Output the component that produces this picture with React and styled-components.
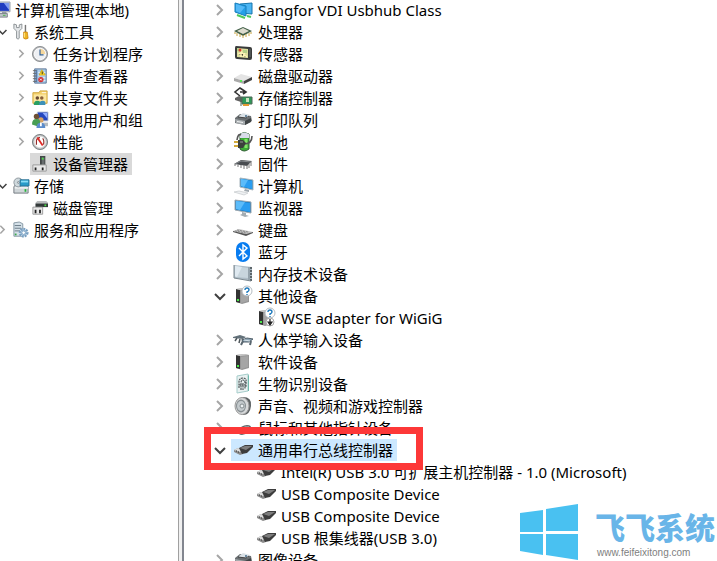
import React, { useState } from "react";

import styled, { createGlobalStyle } from "styled-components";

const GlobalStyle = createGlobalStyle`
  * {
    box-sizing: border-box;
  }
  body {
    margin: 0;
    background-color: #ffffff;
    overflow: hidden;
  }
`;

const Page = styled.main`
  position: relative;
  display: flex;
  height: 100vh;
  overflow: hidden;
  color: #000000;
  font-family: "Noto Sans", "Noto Sans CJK SC", sans-serif;
  font-size: 15px;
  line-height: 22px;
`;
const SidePane = styled.nav`
  flex: 0 0 178px;
  overflow: hidden;
`;
const Splitter = styled.div`
  flex: 0 0 6px;
  background-color: #f0f0f0;
  border-left: 1px solid #a0a0a0;
  border-right: 2px solid #82868f;
`;
const MainPane = styled.section`
  flex: 1;
  min-width: 0;
  overflow: hidden;
`;
const Tree = styled.ul`
  list-style: none;
  margin: -1px 0 0 ${(props) => props.$offset}px;
  padding: 0;
`;
const Row = styled.li`
  display: flex;
  height: 22px;
  padding-left: ${(props) => props.$indent}px;
`;
const Toggle = styled.button`
  display: flex;
  align-items: center;
  justify-content: center;
  width: ${(props) => props.$w}px;
  padding: 0;
  border: none;
  background-color: transparent;
  visibility: ${(props) => (props.$hidden ? "hidden" : "visible")};
`;
const Label = styled.button`
  position: relative;
  display: flex;
  align-items: center;
  gap: ${(props) => props.$gap}px;
  padding: 0 4px 0 ${(props) => props.$pad}px;
  border: none;
  background-color: ${(props) => props.$bg || "transparent"};
  color: inherit;
  font: inherit;
  white-space: nowrap;
`;
const Marker = styled.span`
  position: absolute;
  z-index: 1;
  inset: -12px -26px -9px -27px;
  border: 7px solid #fd3838;
  pointer-events: none;
`;
const Picture = styled.svg`
  flex: none;
  overflow: visible;
`;
const Brand = styled.a`
  position: absolute;
  right: 2px;
  bottom: 0;
  display: flex;
  align-items: flex-end;
  gap: 16px;
  color: #69b5e8;
  text-decoration: none;
`;
const BrandText = styled.span`
  display: flex;
  flex-direction: column;
`;
const BrandName = styled.strong`
  font-family: "Noto Sans CJK SC", sans-serif;
  font-size: 30px;
  font-weight: 900;
  line-height: 38px;
`;
const BrandUrl = styled.span`
  padding-left: 2px;
  color: #808080;
  font-family: "Liberation Sans", sans-serif;
  font-size: 10px;
  line-height: 16px;
`;

const Usb = () => (
  <>
    <path d="M0 9l4-2 5 2 0 4-3 1-6-3z" fill="#8b8b8b" />
    <path d="M0 9l4-2 5 2-3 2z" fill="#dcdcdc" />
    <path d="M2 10h1M4 11h1" stroke="#333" />
    <path d="M5 7l6-3h8v2l-6 6-5 1z" fill="#3d3d3d" />
    <path d="M6 7l5-2h7l-6 4z" fill="#7d7d7d" />
  </>
);
const Tower = () => (
  <>
    <path d="M2 2l8-1 5 1v13l-7 2-6-2z" fill="#969696" />
    <path d="M2 2l4 1v13l-4-1z" fill="#333" />
    <path d="M2 2l8-1 5 1-9 1z" fill="#c9c9c9" />
    <path d="M7 4l7-1v11l-7 2z" fill="#a5a5a5" />
    <path d="M4 12v2" stroke="#4bea4b" strokeWidth="2" />
  </>
);
const Query = () => (
  <>
    <circle cx="13" cy="4" r="5" fill="#fff" stroke="#b5bcc2" />
    <path d="M11 3q0-2 2-2t2 2q0 1-2 2v1M13 7v1" fill="none" stroke="#1c78bb" strokeWidth="1.4" />
  </>
);
const Monitor = () => (
  <>
    <path d="M1 1l16 2v11L1 11z" fill="#1976bb" stroke="#9ca7af" />
    <path d="M2 2l14 2v9L2 10z" fill="#2b9df0" />
    <path d="M2 2l9 1-5 8-4-1z" fill="#5cbcfa" />
    <path d="M8 13l4 1v2l3 1-4 1-5-2 2-1z" fill="#a4adb3" />
  </>
);
const Board = () => (
  <>
    <path d="M1 7l5-4 11 2 1 5-7 4-10-2z" fill="#6b7073" />
    <path d="M5 5l4-3 7 2-3 3-8-1z" fill="#dbe2e7" />
    <path d="M4 6l8 1 3-2" stroke="#444" fill="none" />
    <path d="M1 8l10 2v4l-9-2z" fill="#a5aaad" />
    <path d="M11 10l6-3v4l-6 3z" fill="#404446" />
    <path d="M3 10l6 1v1l-6-1z" fill="#f1f3f4" />
    <circle cx="12" cy="5" r="1" fill="#456b8a" />
  </>
);
const Rack = () => (
  <>
    <path d="M1 10h15v7H1z" fill="#e8e8e8" stroke="#969696" />
    <path d="M4 13v3M12 13v3" stroke="#222" strokeWidth="2" />
  </>
);

const glyphs = {
  pc: (
    <>
      <path d="M5 0h13v11H5z" fill="#dfe3e8" stroke="#8c96a0" />
      <path d="M6 1h11v9H6z" fill="#1f3cc0" />
      <path d="M11 1h6v8z" fill="#7e9bf1" />
      <path d="M9 11h5v2H9z" fill="#9299a1" />
      <path d="M1 13h14v4H1z" fill="#bdc3c8" stroke="#777e85" />
      <path d="M10 15h3" stroke="#3fb73e" />
    </>
  ),
  tools: (
    <>
      <path d="M1 0v5l3 3v8q2 2 3 0V8l3-3V0L7 1v3H4V1z" fill="#e4e7e9" stroke="#7b8185" strokeWidth=".9" />
      <path d="M14 1v8" stroke="#777" strokeWidth="1.6" />
      <path d="M12 9h4l1 7q-3 2-5 0z" fill="#eeb422" stroke="#c77c0b" strokeWidth=".8" />
      <path d="M13 10v5" stroke="#ffe98b" />
    </>
  ),
  clock: (
    <>
      <circle cx="9" cy="9" r="8.500" fill="#b7b9bc" stroke="#84878b" />
      <circle cx="9" cy="9" r="6.500" fill="#eef0f4" stroke="#fff" />
      <path d="M9 9h6A6 6 0 0 0 9 3z" fill="#f5d79d" />
      <path d="M9 4v6h4" fill="none" stroke="#35608e" strokeWidth="1.300" />
    </>
  ),
  events: (
    <>
      <path d="M3 1h13v16H3z" fill="#a9cbe8" stroke="#526d92" />
      <path d="M5 2v14" stroke="#5a7eae" strokeWidth="2" />
      <path d="M7 5h8M7 8h8M12 11h3M12 14h3" stroke="#e9f3fa" />
      <path d="M1 3h4M1 6h4M1 9h4M1 12h4M1 15h4" stroke="#666" />
      <path d="M11 2l4 6H8z" fill="#ffdc20" stroke="#c9a11c" strokeWidth=".8" />
      <path d="M11.500 4v3" stroke="#222" />
      <circle cx="10" cy="13" r="3" fill="#d62f30" />
      <path d="M9 12l2 2m0-2l-2 2" stroke="#fff" />
    </>
  ),
  shared: (
    <>
      <path d="M1 3h7l1-2h8v14H1z" fill="#f3cf68" stroke="#cda33a" />
      <path d="M2 5h14v9H2z" fill="#fbe6a0" />
      <path d="M11 3h5" stroke="#fff" />
      <circle cx="6" cy="9" r="2" fill="#684831" />
      <circle cx="11" cy="9" r="2" fill="#8b603a" />
      <path d="M2 17q0-5 4-5t4 5z" fill="#299f62" />
      <path d="M8 17q0-5 4-5t3 5z" fill="#3e91b8" />
    </>
  ),
  users: (
    <>
      <path d="M6 0h12v10H6z" fill="#2547be" stroke="#bcc6d4" />
      <path d="M12 1h5v6z" fill="#91adff" />
      <path d="M12 12h6v4h-6z" fill="#b5bbc0" />
      <circle cx="5" cy="5" r="3" fill="#6f5034" />
      <circle cx="10" cy="9" r="3" fill="#d6a264" />
      <path d="M0 14q0-6 5-6t4 5l-3 3z" fill="#489e53" />
      <path d="M5 18q0-6 5-6t5 6z" fill="#5b8ccb" />
      <path d="M10 12v4" stroke="#fff" strokeWidth="2" />
    </>
  ),
  performance: (
    <>
      <circle cx="9" cy="9" r="8.500" fill="#b9bcbc" stroke="#70777a" />
      <circle cx="9" cy="9" r="6.500" fill="#fff" stroke="#ddd" />
      <path d="M5 12V7q1-3 4-3M12 5q2 2 1 7" fill="none" stroke="#902b28" strokeWidth="1.300" />
      <path d="M6 4l6 9" stroke="#df2824" strokeWidth="2" />
    </>
  ),
  devices: (
    <>
      <path d="M9 0h6v11H9z" fill="#424747" />
      <path d="M11 1l3 1v8h-3z" fill="#686d6e" />
      <path d="M12 2v2" stroke="#48e346" strokeWidth="2" />
      <Rack />
    </>
  ),
  storage: (
    <>
      <path d="M1 10l2-3h12l2 3v7H1z" fill="#cfd5d8" stroke="#697178" />
      <path d="M2 10h15v2H2z" fill="#edf0f1" />
      <circle cx="6" cy="5" r="5" fill="#cfd9dd" stroke="#899298" />
      <circle cx="6" cy="5" r="1" fill="#fff" stroke="#78838b" />
      <path d="M8 2h10v7H8z" fill="#299bc9" stroke="#246e92" />
      <path d="M9 3h8v2H9z" fill="#8bdef7" />
      <path d="M13 14h2" stroke="#26b33a" strokeWidth="3" />
    </>
  ),
  disk: (
    <>
      <path d="M4 3l2-2h10l2 2v5H4z" fill="#b8bbbc" />
      <path d="M4 4h14v4H4z" fill="#333939" />
      <path d="M14 6h2" stroke="#48e346" strokeWidth="2" />
      <path d="M1 8h11v8H1z" fill="#e8e8e8" stroke="#969696" />
      <path d="M4 11v4M9 11v4" stroke="#222" strokeWidth="2" />
    </>
  ),
  services: (
    <>
      <path d="M1 1l6-1 4 2v14H1z" fill="#d4e0e8" stroke="#7f919e" />
      <path d="M2 4h7M2 7h7M2 10h6" stroke="#60717d" />
      <path d="M2 14h2" stroke="#3ba74a" strokeWidth="2" />
      <circle cx="12" cy="12" r="4" fill="#c5daec" stroke="#789fc1" strokeWidth="3" strokeDasharray="2 1" />
      <circle cx="12" cy="12" r="2" fill="#fff" stroke="#789fc1" />
    </>
  ),
  sangfor: (
    <>
      <path d="M6 3l12-1v11L6 12z" fill="#4bb5f3" stroke="#1675ad" />
      <path d="M1 2l11 3v10L1 11z" fill="#249fe8" stroke="#187fbb" />
      <path d="M2 3l9 3-5 6-4-2z" fill="#54b9f7" />
      <path d="M3 14l8 3M13 15l4 1" fill="none" stroke="#4dc85c" strokeWidth="2" />
    </>
  ),
  cpu: (
    <>
      <path d="M0 8l9-4 9 4-9 5z" fill="#426048" />
      <path d="M3 8l6-3 6 3-6 3z" fill="#dddccf" />
      <path d="M1 9v2m2-1v3m3-2v3m3-2v3m3-4v3m3-4v3m2-4v2" stroke="#c5a23f" />
    </>
  ),
  sensor: (
    <>
      <path d="M2 1l14 1q2 0 2 2v9q0 2-2 2L3 14q-2 0-2-2V3q0-2 1-2z" fill="#393b3b" />
      <path d="M3 3l11 1v9L3 12z" fill="#dddf9d" />
      <path d="M4 9l4-1 5 4M7 4v8M12 5l-3 7" stroke="#fff5b9" strokeWidth="1.500" />
      <path d="M3 3l4 1v3l-4-1zM9 5h4v3H9z" fill="#b5cf88" />
      <circle cx="6" cy="5" r="1.500" fill="#d83a2c" />
      <path d="M16 4v8" stroke="#69706f" />
    </>
  ),
  drive: (
    <>
      <path d="M0 11l7-4 11 3-8 4z" fill="#e4e4e4" />
      <path d="M0 11l10 3v3L0 14z" fill="#a9a9a9" />
      <path d="M10 14l8-4v3l-8 4z" fill="#424242" />
      <path d="M7 13v2" stroke="#59e654" strokeWidth="2" />
    </>
  ),
  controller: (
    <>
      <path d="M9 1L6-1 1 3l5 4M6 3h5m-2-2l3 2-3 2" fill="none" stroke="#333" strokeWidth="1.600" />
      <path d="M1 9l4-2 5 2v5l-9-3z" fill="#626262" />
      <path d="M7 7v10M8 8h10v7H8z" fill="#2e9958" stroke="#4f6657" />
      <path d="M12 9h3v4h-3z" fill="#c9e4bd" />
      <path d="M9 16h6" stroke="#e49a32" strokeWidth="2" />
    </>
  ),
  printer: <Board />,
  battery: (
    <>
      <path d="M6 1q4-3 9 0v15q-5 4-9 0z" fill="#3cab36" stroke="#315d35" />
      <path d="M6 1q4-3 9 0v4H6z" fill="#d9dcea" />
      <path d="M12 6v9" stroke="#82e267" strokeWidth="3" />
      <path d="M3 7q1-7 4-5M10 11q8 0 8-8" fill="none" stroke="#555" strokeWidth="1.600" />
      <path d="M4 7h5l3 3-3 5H4z" fill="#3b403c" />
      <path d="M6 9h3" stroke="#959c96" />
      <path d="M0 9h4M0 13h4" stroke="#d2aa3a" strokeWidth="2" />
    </>
  ),
  firmware: (
    <>
      <path d="M0 9l7-4 11 1-5 5z" fill="#484c50" />
      <path d="M1 9l6-3 10 1" fill="none" stroke="#85898c" />
      <path d="M1 9v2m3-1v2m3-2v3m3-3v4m3-4v4m2-5v4m2-6v4" stroke="#777" />
    </>
  ),
  computer: (
    <>
      <path d="M6 1l13 2v10L6 10z" fill="#1e83c6" stroke="#a7b5bd" />
      <path d="M7 2l11 2v8L7 9z" fill="#2b9df0" />
      <path d="M7 2l7 1-4 7-3-1z" fill="#5cbcfa" />
      <path d="M11 12l4 1v2l-5-1z" fill="#9ca5ac" />
      <path d="M0 15l5-1 9 2-4 2z" fill="#eef0f2" stroke="#c4c9cc" strokeWidth=".7" />
    </>
  ),
  monitor: <Monitor />,
  keyboard: (
    <>
      <path d="M-1 10l6-2 14 3-7 2z" fill="#c4c4c4" />
      <path d="M-1 10l13 3 7-2v1l-7 3-13-4z" fill="#555" />
      <path d="M3 9l11 2M1 10l11 2" stroke="#888" strokeDasharray="2 1" />
    </>
  ),
  bluetooth: (
    <>
      <rect x="2" y="-1" width="14" height="20" rx="7" fill="#087cf0" />
      <path d="M5 5l8 8-4 3V2l4 3-8 8" fill="none" stroke="#fff" strokeWidth="1.400" />
    </>
  ),
  memory: (
    <>
      <path d="M0 0l18 2v14L0 13z" fill="#aebcc6" />
      <path d="M1 1l13 2v10L1 12z" fill="#c8d5dd" />
      <path d="M1 1l7 1-5 10-2-1z" fill="#dfe9f0" />
      <path d="M15 2v13" stroke="#7d8a92" />
      <path d="M17 2v14" stroke="#41484c" strokeWidth="1.500" strokeDasharray="2 1" />
      <path d="M0 0v13l17 3" fill="none" stroke="#7a878f" />
    </>
  ),
  other: (
    <>
      <Tower />
      <Query />
    </>
  ),
  adapter: (
    <>
      <Tower />
      <Query />
      <circle cx="13" cy="13" r="4" fill="#fff" stroke="#aaa" />
      <path d="M13 10v3m-2 0l2 3 2-3z" fill="#222" stroke="#222" strokeWidth="1.200" />
    </>
  ),
  hid: (
    <>
      <path d="M-1 6l7-2 6 2-3 2-10-1z" fill="#63717a" />
      <path d="M1 10l2-3M5 12l1-4M9 10l-1-2" stroke="#4e565b" strokeWidth="1.500" />
      <path d="M8 9l5-2 6 1-4 3-6 0z" fill="#8da4b4" stroke="#52616c" />
      <path d="M7 14l2-4M16 14l1-4" stroke="#59666f" strokeWidth="2" />
      <path d="M10 9l6 1" stroke="#d9e4ea" />
    </>
  ),
  software: <Tower />,
  biometric: (
    <>
      <path d="M3 1l11-2v17L3 18z" fill="#e9f1f1" stroke="#a6cdcb" />
      <path d="M14-1l1 2v15l-1 0z" fill="#6fb9ac" />
      <path d="M5 13V7q0-4 4-4t3 5v4M7 15V8q0-3 2-3t2 3v6M9 8v7M5 10h6" fill="none" stroke="#535b5d" strokeWidth="1.200" strokeDasharray="2 .6" />
    </>
  ),
  sound: (
    <>
      <path d="M9 0q9 0 8 9t-8 9z" fill="#5c6163" />
      <ellipse cx="8" cy="9" rx="7" ry="8.500" fill="#d7d9da" stroke="#999" />
      <ellipse cx="7" cy="9" rx="5" ry="6.500" fill="#899094" />
      <ellipse cx="7" cy="9" rx="4" ry="5" fill="#c4cacd" />
      <circle cx="8" cy="9" r="2" fill="#eef2f4" stroke="#848b8e" />
    </>
  ),
  mouse: (
    <>
      <path d="M4 12q3-6 9-6 5 0 4 4t-9 6q-4 0-4-4z" fill="#62686a" />
      <path d="M7 10q4-3 8-2" fill="none" stroke="#bdc5c9" />
    </>
  ),
  usb: <Usb />,
  imaging: <Board />,
};

const Icon = ({ name, size }) => (
  <Picture width={size} height={size} viewBox="0 0 18 18" aria-hidden="true">
    {glyphs[name]}
  </Picture>
);

const Chevron = ({ open, small }) => (
  <Picture width={small ? 10 : 13} height={small ? 10 : 13} viewBox="0 0 13 13" fill="none" aria-hidden="true">
    <path
      d={open ? "M1 4l5 5 5-5" : "M3 1l5 5-5 5"}
      stroke={open ? "#404040" : "#a6a6a6"}
      strokeWidth="2"
    />
  </Picture>
);

const consoleItems = [
  { text: "计算机管理(本地)", icon: "pc", level: 0, leaf: true },
  { text: "系统工具", icon: "tools", level: 1, open: true },
  { text: "任务计划程序", icon: "clock", level: 2 },
  { text: "事件查看器", icon: "events", level: 2 },
  { text: "共享文件夹", icon: "shared", level: 2 },
  { text: "本地用户和组", icon: "users", level: 2 },
  { text: "性能", icon: "performance", level: 2 },
  { text: "设备管理器", icon: "devices", level: 2, leaf: true },
  { text: "存储", icon: "storage", level: 1, open: true },
  { text: "磁盘管理", icon: "disk", level: 2, leaf: true },
  { text: "服务和应用程序", icon: "services", level: 1 },
];

const deviceItems = [
  { text: "Sangfor VDI Usbhub Class", icon: "sangfor", level: 0 },
  { text: "处理器", icon: "cpu", level: 0 },
  { text: "传感器", icon: "sensor", level: 0 },
  { text: "磁盘驱动器", icon: "drive", level: 0 },
  { text: "存储控制器", icon: "controller", level: 0 },
  { text: "打印队列", icon: "printer", level: 0 },
  { text: "电池", icon: "battery", level: 0 },
  { text: "固件", icon: "firmware", level: 0 },
  { text: "计算机", icon: "computer", level: 0 },
  { text: "监视器", icon: "monitor", level: 0 },
  { text: "键盘", icon: "keyboard", level: 0 },
  { text: "蓝牙", icon: "bluetooth", level: 0 },
  { text: "内存技术设备", icon: "memory", level: 0 },
  { text: "其他设备", icon: "other", level: 0, open: true },
  { text: "WSE adapter for WiGiG", icon: "adapter", level: 1, leaf: true },
  { text: "人体学输入设备", icon: "hid", level: 0 },
  { text: "软件设备", icon: "software", level: 0 },
  { text: "生物识别设备", icon: "biometric", level: 0 },
  { text: "声音、视频和游戏控制器", icon: "sound", level: 0 },
  { text: "鼠标和其他指针设备", icon: "mouse", level: 0 },
  { text: "通用串行总线控制器", icon: "usb", level: 0, open: true, marked: true },
  { text: "Intel(R) USB 3.0 可扩展主机控制器 - 1.0 (Microsoft)", icon: "usb", level: 1, leaf: true },
  { text: "USB Composite Device", icon: "usb", level: 1, leaf: true },
  { text: "USB Composite Device", icon: "usb", level: 1, leaf: true },
  { text: "USB 根集线器(USB 3.0)", icon: "usb", level: 1, leaf: true },
  { text: "图像设备", icon: "imaging", level: 0 },
];

const TreeList = ({ items, start, offset, step, small, highlight }) => {
  const [selected, setSelected] = useState(start);

  return (
    <Tree $offset={offset}>
      {items.map((item, i) => (
        <Row key={i} $indent={item.level * step}>
          <Toggle $w={small ? 16 : 21} $hidden={item.leaf} aria-label={item.text} aria-expanded={!!item.open}>
            <Chevron open={item.open} small={small} />
          </Toggle>
          <Label
            $gap={small ? 5 : 6}
            $pad={small ? 2 : 3}
            $bg={selected === i ? highlight : ""}
            onClick={() => setSelected(i)}
          >
            <Icon name={item.icon} size={small ? 16 : 18} />
            {item.text}
            {item.marked && <Marker />}
          </Label>
        </Row>
      ))}
    </Tree>
  );
};

const WindowsFlag = () => (
  <Picture width="60" height="57" viewBox="0 0 60 57" aria-hidden="true">
    <path d="M1 9l23-3v22H1zM27 5l32-5v27H27zM1 30h23v21L1 47zM27 30h32v26l-32-5z" fill="#49c1f1" />
  </Picture>
);

export default function App() {
  return (
    <>
      <GlobalStyle />
      <Page>
        <SidePane>
          <TreeList items={consoleItems} start={7} offset={-24} step={19} highlight="#d9d9d9" small />
        </SidePane>
        <Splitter />
        <MainPane>
          <TreeList items={deviceItems} start={20} offset={26} step={23} highlight="#cce8ff" />
        </MainPane>
        <Brand href="#">
          <WindowsFlag />
          <BrandText>
            <BrandName>飞飞系统</BrandName>
            <BrandUrl>www.feifeixitong.com</BrandUrl>
          </BrandText>
        </Brand>
      </Page>
    </>
  );
}
